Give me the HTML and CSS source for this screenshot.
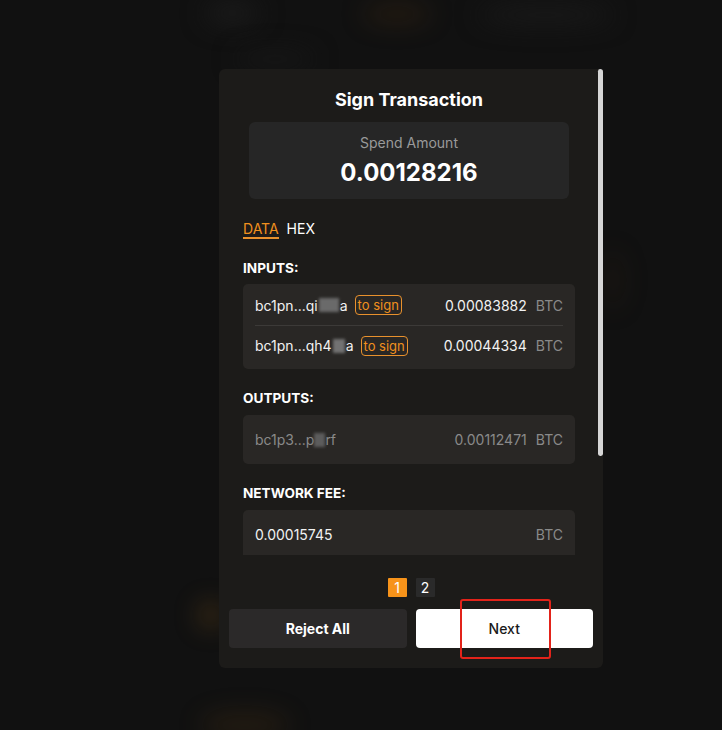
FILE: index.html
```html
<!DOCTYPE html>
<html>
<head>
<meta charset="utf-8">
<link rel="stylesheet" href="styles.css">
</head>
<body>
<div class="page">
  <div class="glow g1"></div>
  <div class="glow g2"></div>
  <div class="glow g3"></div>
  <div class="glow g4"></div>
  <div class="glow g5"></div>
  <div class="glow g6"></div>
  <div class="glow g7"></div>

  <div class="modal">
    <div class="scroll">
      <h1 class="title">Sign Transaction</h1>
      <div class="spend">
        <div class="spend-label">Spend Amount</div>
        <div class="spend-value">0.00128216</div>
      </div>
      <div class="tabs">
        <span class="tab active">DATA</span>
        <span class="tab">HEX</span>
      </div>

      <div class="label">INPUTS:</div>
      <div class="box inputs">
        <div class="row">
          <span class="addr">bc1pn...qi<span class="blur b1"></span>a</span>
          <span class="badge">to sign</span>
          <span class="amt">0.00083882</span>
          <span class="unit">BTC</span>
        </div>
        <div class="row divided">
          <span class="addr">bc1pn...qh4<span class="blur b2"></span>a</span>
          <span class="badge">to sign</span>
          <span class="amt">0.00044334</span>
          <span class="unit">BTC</span>
        </div>
      </div>

      <div class="label">OUTPUTS:</div>
      <div class="box single">
        <div class="row muted">
          <span class="addr">bc1p3...p<span class="blur b3"></span>rf</span>
          <span class="amt">0.00112471</span>
          <span class="unit">BTC</span>
        </div>
      </div>

      <div class="label">NETWORK FEE:</div>
      <div class="box single">
        <div class="row">
          <span class="addr">0.00015745</span>
          <span class="amt"></span>
          <span class="unit">BTC</span>
        </div>
      </div>
      <div class="thumb"></div>
    </div>

    <div class="footer">
      <div class="pager">
        <span class="pg current">1</span>
        <span class="pg">2</span>
      </div>
      <div class="buttons">
        <button class="btn reject">Reject All</button>
        <button class="btn next">Next</button>
      </div>
    </div>
  </div>

  <div class="annot"></div>
</div>
</body>
</html>
```

FILE: styles.css
```css
* { box-sizing: border-box; }
html, body { margin: 0; padding: 0; background: #111111; }
body { font-family: Inter, "Noto Sans", sans-serif; color: #fff; }

.page {
  position: relative;
  width: 722px;
  height: 730px;
  overflow: hidden;
  background: #111111;
  padding: 69px 0 0 219px;
}

.glow { position: absolute; border-radius: 50%; filter: blur(12px); }
.g1 { left: 205px; top: 2px; width: 55px; height: 22px; background: #1b1b1b; }
.g2 { left: 362px; top: 4px; width: 70px; height: 20px; background: rgba(90, 55, 15, 0.25); }
.g3 { left: 478px; top: 6px; width: 135px; height: 18px; background: #1a1a1a; }
.g4 { left: 235px; top: 52px; width: 80px; height: 14px; background: #181818; }
.g5 { left: 198px; top: 602px; width: 26px; height: 26px; background: rgba(130, 85, 25, 0.35); }
.g6 { left: 200px; top: 712px; width: 90px; height: 26px; background: rgba(100, 65, 20, 0.22); }
.g7 { left: 603px; top: 250px; width: 20px; height: 60px; background: rgba(60, 40, 15, 0.18); }

.modal {
  position: relative;
  width: 384px;
  height: 599px;
  background: #1c1b19;
  border-radius: 6px;
  display: flex;
  flex-direction: column;
}

.scroll {
  position: relative;
  height: 486px;
  overflow: hidden;
  padding: 20px 28px 0 24px;
}

.thumb {
  position: absolute;
  right: 0;
  top: 0;
  width: 5px;
  height: 387px;
  background: #d6d6d6;
  border-radius: 3px 4px 3px 3px;
}

.title {
  margin: 0 0 11px;
  text-align: center;
  font-size: 18px;
  line-height: 22px;
  font-weight: 700;
  color: #fff;
}

.spend {
  margin: 0 6px;
  height: 77px;
  background: #262626;
  border-radius: 6px;
  padding-top: 12px;
  text-align: center;
}
.spend-label { font-size: 14px; line-height: 18px; color: #9a9a9a; }
.spend-value { margin-top: 6px; font-size: 24px; line-height: 30px; font-weight: 700; color: #fff; }

.tabs {
  margin-top: 22px;
  display: flex;
  gap: 8px;
  font-size: 14px;
  line-height: 16px;
}
.tab { color: #fff; border-bottom: 2px solid transparent; }
.tab.active { color: #f0901e; border-bottom-color: #e8912d; }

.label {
  margin-bottom: 9px;
  font-size: 13.6px;
  line-height: 16px;
  font-weight: 700;
  color: #fff;
}
.tabs + .label { margin-top: 21px; margin-bottom: 8px; }
.box + .label { margin-top: 21px; }

.box {
  background: #292725;
  border-radius: 5px;
  padding: 0 12px;
}
.inputs { padding: 1px 12px 4px; }
.single { height: 49px; }
.single .row { height: 49px; }

.row {
  display: flex;
  align-items: center;
  height: 40px;
  font-size: 14px;
  color: #f2f2f2;
}
.row.divided { border-top: 1px solid #3c3a38; }
.addr { display: flex; align-items: center; }
.badge {
  margin-left: 7px;
  height: 20px;
  padding: 0 2px;
  border: 1px solid #e8912d;
  border-radius: 4px;
  color: #f0901e;
  font-size: 13px;
  line-height: 18px;
}
.amt { margin-left: auto; }
.unit { margin-left: 9px; color: #8a8a8a; }
.muted { color: #8a8a8a; }

.blur {
  display: inline-block;
  height: 14px;
  background: #6a6a6a;
  filter: blur(1.5px);
}
.b1 { width: 20px; margin: 0 1px; }
.b2 { width: 12px; margin: 0 1px; background: #727272; }
.b3 { width: 11px; background: #5c5c5c; }

.footer {
  padding: 23px 10px 0 10px;
  display: flex;
  flex-direction: column;
}
.pager {
  display: flex;
  justify-content: center;
  gap: 9px;
}
.pg {
  width: 19px;
  height: 19px;
  border-radius: 1px;
  background: #2a2a2a;
  color: #fff;
  font-size: 14px;
  line-height: 19px;
  text-align: center;
}
.pg.current { background: #f7931a; }

.buttons {
  margin-top: 12px;
  display: flex;
  gap: 9px;
}
.btn {
  flex: 1;
  height: 39px;
  border: none;
  border-radius: 4px;
  font-family: Inter, "Noto Sans", sans-serif;
  font-size: 14px;
  cursor: pointer;
}
.reject { background: #2b2929; color: #fff; font-weight: 700; }
.next { background: #ffffff; color: #1a1a1a; font-weight: 500; }

.annot {
  position: absolute;
  left: 460px;
  top: 599px;
  width: 91px;
  height: 60px;
  border: 2px solid #e2231a;
  border-radius: 3px;
}
```
